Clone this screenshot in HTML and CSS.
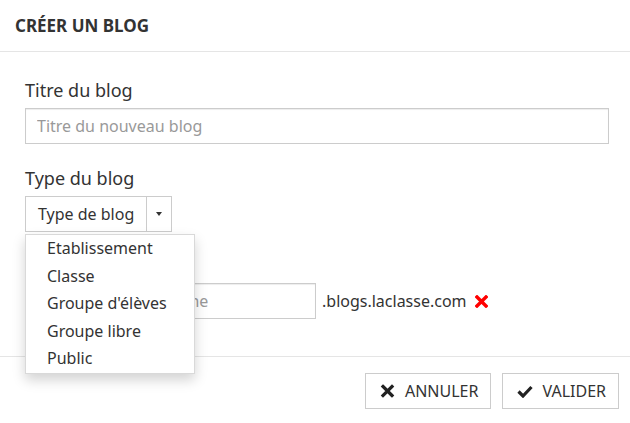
FILE: index.html
```html
<!DOCTYPE html>
<html lang="fr">

<head>
    <meta charset="UTF-8">
    <title>Créer un blog</title>
    <link rel="stylesheet" href="styles.css">
</head>

<body>
    <div class="modal">
        <div class="modal-header">
            <h4 class="modal-title">Créer un blog</h4>
        </div>

        <div class="modal-body">
            <div class="form-group">
                <label for="titre">Titre du blog</label>
                <input type="text" id="titre" placeholder="Titre du nouveau blog">
            </div>

            <div class="form-group">
                <label>Type du blog</label>
                <div class="btn-group">
                    <button class="btn btn-type">Type de blog</button>
                    <button class="btn btn-caret"><span class="caret"></span></button>
                    <ul class="dropdown-menu">
                        <li>Etablissement</li>
                        <li>Classe</li>
                        <li>Groupe d'élèves</li>
                        <li>Groupe libre</li>
                        <li>Public</li>
                    </ul>
                </div>
            </div>

            <!-- le libellé de l'adresse est caché sous le menu ouvert -->
            <div class="form-group domain-group">
                <div class="domain-row">
                    <input type="text" id="domaine" class="domain-input" placeholder="Nom du sous-domaine">
                    <span class="domain-suffix">.blogs.laclasse.com</span>
                    <svg class="invalid" width="13" height="13" viewBox="0 0 13 13">
                        <path d="M2 2 L11 11 M11 2 L2 11" stroke="#f00" stroke-width="3.4" stroke-linecap="square" />
                    </svg>
                </div>
            </div>
        </div>

        <div class="modal-footer">
            <button class="btn btn-action">
                <svg width="16" height="14" viewBox="0 0 16 14">
                    <path d="M3 2.5 L12 11.5 M12 2.5 L3 11.5" stroke="#222" stroke-width="3.2" stroke-linecap="square" />
                </svg>
                Annuler
            </button>
            <button class="btn btn-action">
                <svg width="16" height="14" viewBox="0 0 16 14">
                    <path d="M1.5 7.5 L6 12 L14.5 3" fill="none" stroke="#222" stroke-width="3.2" />
                </svg>
                Valider
            </button>
        </div>
    </div>
</body>

</html>
```

FILE: styles.css
```css
body {
    margin: 0;
    font-family: "Noto Sans", sans-serif;
    color: #333;
    background-color: #fff;
}

.modal {
    width: 630px;
    height: 423px;
    background-color: #fff;
    overflow: hidden;
}

.modal-header {
    height: 51px;
    padding: 0 15px;
    display: flex;
    align-items: center;
    border-bottom: 1px solid #e5e5e5;
}

.modal-title {
    margin: 0;
    font-size: 17px;
    font-weight: bold;
    text-transform: uppercase;
    color: #333;
}

.modal-body {
    padding: 25px 21px 0 25px;
    height: 279px;
}

.form-group {
    margin-bottom: 21px;
}

.domain-group {
    padding-top: 30px;
}

label {
    display: block;
    font-size: 18px;
    line-height: 26px;
    margin-bottom: 5px;
}

input[type="text"] {
    display: block;
    box-sizing: border-box;
    width: 100%;
    height: 36px;
    padding: 0 11px;
    font-family: "Noto Sans", sans-serif;
    font-size: 16px;
    color: #333;
    border: 1px solid #ccc;
    border-radius: 0;
    box-shadow: inset 0 1px 1px rgba(0, 0, 0, 0.075);
    outline: none;
}

input::placeholder {
    color: #999;
}

.btn {
    box-sizing: border-box;
    height: 36px;
    font-family: "Noto Sans", sans-serif;
    font-size: 16px;
    color: #333;
    background-color: #fff;
    border: 1px solid #ccc;
    border-radius: 0;
    white-space: nowrap;
    cursor: pointer;
}

.btn-group {
    position: relative;
    display: flex;
}

.btn-type {
    padding: 0 12px;
}

.btn-caret {
    width: 26px;
    margin-left: -1px;
    padding: 0;
    display: flex;
    align-items: center;
    justify-content: center;
}

.caret {
    width: 0;
    height: 0;
    border-top: 4px solid #333;
    border-left: 3.5px solid transparent;
    border-right: 3.5px solid transparent;
}

.dropdown-menu {
    position: absolute;
    top: 38px;
    left: 0;
    z-index: 10;
    width: 170px;
    box-sizing: border-box;
    margin: 0;
    padding: 0;
    list-style: none;
    background-color: #fff;
    border: 1px solid rgba(0, 0, 0, 0.15);
    box-shadow: 0 6px 12px rgba(0, 0, 0, 0.175);
}

.dropdown-menu li {
    padding: 0 21px;
    font-size: 16px;
    line-height: 27.6px;
    color: #333;
}

.domain-row {
    display: flex;
    align-items: center;
}

input.domain-input {
    flex: 0 0 291px;
    width: 291px;
}

.domain-suffix {
    margin-left: 6px;
    font-size: 16px;
}

.invalid {
    margin-left: 8px;
}

.modal-footer {
    border-top: 1px solid #e5e5e5;
    padding: 16px 11px 0 0;
    display: flex;
    justify-content: flex-end;
    gap: 11px;
}

.btn-action {
    display: flex;
    align-items: center;
    gap: 9px;
    padding: 0 12px 0 14px;
    text-transform: uppercase;
}
```
